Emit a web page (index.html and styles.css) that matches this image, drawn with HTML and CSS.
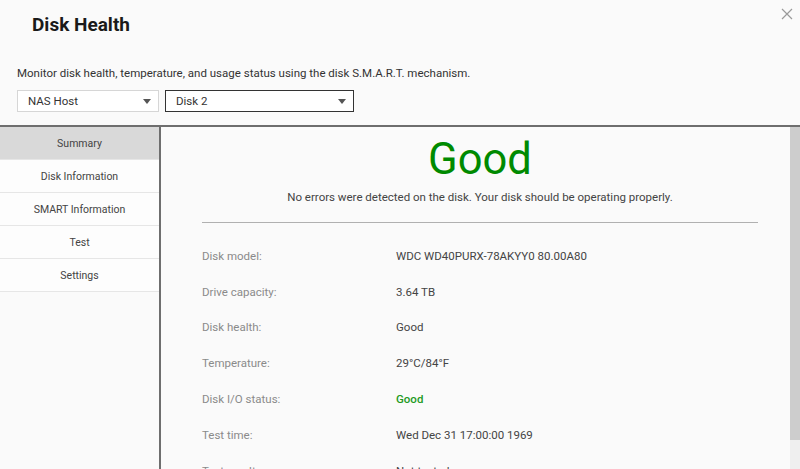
FILE: index.html
```html
<!DOCTYPE html>
<html lang="en">
<head>
    <meta charset="UTF-8">
    <meta name="viewport" content="width=device-width, initial-scale=1.0">
    <title>Disk Health</title>
    <link rel="stylesheet" href="styles.css">
</head>
<body>
    <div class="dialog">
        <header class="dialog-header">
            <h1 class="title">Disk Health</h1>
            <span class="close-btn">
                <svg width="12" height="12" viewBox="0 0 12 12">
                    <path d="M1 1L11 11M11 1L1 11" stroke="#9a9a9a" stroke-width="1.2" fill="none"/>
                </svg>
            </span>
            <p class="description">Monitor disk health, temperature, and usage status using the disk S.M.A.R.T. mechanism.</p>
            <div class="select-row">
                <div class="select select-host">
                    <span>NAS Host</span>
                    <span class="arrow"></span>
                </div>
                <div class="select select-disk">
                    <span>Disk 2</span>
                    <span class="arrow"></span>
                </div>
            </div>
        </header>

        <div class="dialog-body">
            <nav class="sidebar">
                <div class="nav-item active">Summary</div>
                <div class="nav-item">Disk Information</div>
                <div class="nav-item">SMART Information</div>
                <div class="nav-item">Test</div>
                <div class="nav-item">Settings</div>
            </nav>

            <main class="content">
                <div class="status">Good</div>
                <p class="status-text">No errors were detected on the disk. Your disk should be operating properly.</p>
                <hr class="divider">

                <div class="info-list">
                    <div class="info-row">
                        <span class="label">Disk model:</span>
                        <span class="value">WDC WD40PURX-78AKYY0 80.00A80</span>
                    </div>
                    <div class="info-row">
                        <span class="label">Drive capacity:</span>
                        <span class="value">3.64 TB</span>
                    </div>
                    <div class="info-row">
                        <span class="label">Disk health:</span>
                        <span class="value">Good</span>
                    </div>
                    <div class="info-row">
                        <span class="label">Temperature:</span>
                        <span class="value">29°C/84°F</span>
                    </div>
                    <div class="info-row">
                        <span class="label">Disk I/O status:</span>
                        <span class="value ok">Good</span>
                    </div>
                    <div class="info-row">
                        <span class="label">Test time:</span>
                        <span class="value">Wed Dec 31 17:00:00 1969</span>
                    </div>
                    <div class="info-row">
                        <span class="label">Test result:</span>
                        <span class="value">Not tested</span>
                    </div>
                </div>
            </main>

            <div class="scrollbar">
                <div class="thumb"></div>
            </div>
        </div>
    </div>
</body>
</html>
```

FILE: styles.css
```css
html, body {
    margin: 0;
    padding: 0;
    height: 100%;
    overflow: hidden;
}

body {
    background-color: #fafafa;
    color: #333;
    font-family: Roboto, "Liberation Sans", Arial, sans-serif;
}

.dialog {
    height: 469px;
    display: flex;
    flex-direction: column;
}

.dialog-header {
    position: relative;
    height: 127px;
    padding: 13px 0 0 17px;
    box-sizing: border-box;
    border-bottom: 2px solid #6e6e6e;
    flex-shrink: 0;
}

.title {
    margin: 0 0 0 15px;
    font-size: 19px;
    line-height: 24px;
    font-weight: bold;
    color: #1a1a1a;
}

.close-btn {
    position: absolute;
    top: 8px;
    right: 7px;
    width: 12px;
    height: 12px;
}

.close-btn svg {
    display: block;
}

.description {
    margin: 29px 0 0 0;
    font-size: 11.5px;
    line-height: 14px;
    color: #333;
}

.select-row {
    display: flex;
    gap: 6px;
    margin-top: 10px;
}

.select {
    height: 22px;
    box-sizing: border-box;
    display: flex;
    align-items: center;
    justify-content: space-between;
    padding: 0 7px 0 10px;
    font-size: 11.5px;
    color: #333;
    background-color: #fff;
}

.select-host {
    width: 142px;
    border: 1px solid #d6d6d6;
}

.select-disk {
    width: 189px;
    border: 1px solid #333;
}

.arrow {
    width: 0;
    height: 0;
    border-left: 4px solid transparent;
    border-right: 4px solid transparent;
    border-top: 5px solid #555;
}

.dialog-body {
    flex: 1;
    display: flex;
    min-height: 0;
}

.sidebar {
    width: 159px;
    flex-shrink: 0;
    border-right: 2px solid #6e6e6e;
    background-color: #fafafa;
}

.nav-item {
    height: 32px;
    line-height: 33px;
    border-bottom: 1px solid #e6e6e6;
    text-align: center;
    font-size: 10.5px;
    color: #444;
    background-color: #fdfdfd;
}

.nav-item.active {
    background-color: #d9d9d9;
}

.content {
    flex: 1;
    padding: 0 32px 0 41px;
    overflow: hidden;
}

.status {
    margin-top: 8px;
    text-align: center;
    font-size: 43.5px;
    line-height: 50px;
    color: #008a00;
}

.status-text {
    margin: 5px 0 0 0;
    text-align: center;
    font-size: 11.5px;
    line-height: 14px;
    color: #444;
}

.divider {
    margin: 18px 0 0 0;
    border: none;
    border-top: 1px solid #b0b0b0;
}

.info-list {
    padding-top: 15px;
}

.info-row {
    display: flex;
    height: 35.8px;
    align-items: center;
    font-size: 11.5px;
}

.label {
    width: 194px;
    color: #8a8a8a;
}

.value {
    color: #444;
}

.value.ok {
    color: #1e9a1e;
    font-weight: 500;
}

.scrollbar {
    width: 10px;
    flex-shrink: 0;
    background-color: #efefef;
}

.thumb {
    height: 313px;
    background-color: #cdcdcd;
}
```
